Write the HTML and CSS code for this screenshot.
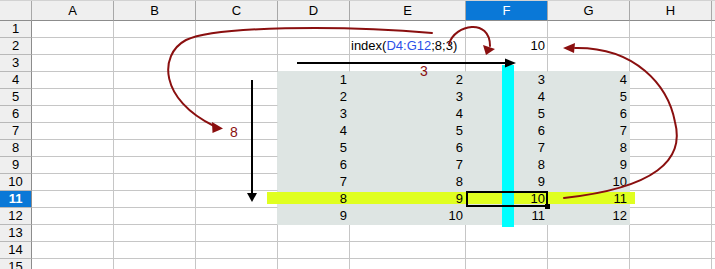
FILE: index.html
```html
<!DOCTYPE html>
<html lang="en">
<head>
    <meta charset="UTF-8">
    <meta name="viewport" content="width=device-width, initial-scale=1.0">
    <title>INDEX</title>
    <link rel="stylesheet" href="styles.css">
</head>
<body>
    <div class="sheet">
        <div class="row head"><div class="ch"></div><div class="ch">A</div><div class="ch">B</div><div class="ch">C</div><div class="ch">D</div><div class="ch">E</div><div class="ch on">F</div><div class="ch">G</div><div class="ch">H</div><div class="ch"></div></div>
        <div class="row"><div class="rh">1</div><div></div><div></div><div></div><div></div><div></div><div></div><div></div><div></div><div></div></div>
        <div class="row"><div class="rh">2</div><div></div><div></div><div></div><div></div><div class="txt">index(<span class="ref">D4:G12</span>;8;3)</div><div><span class="val">10</span></div><div></div><div></div><div></div></div>
        <div class="row"><div class="rh">3</div><div></div><div></div><div></div><div class="edge-b"></div><div class="edge-b"></div><div class="edge-b"></div><div class="edge-b"></div><div></div><div></div></div>
        <div class="row"><div class="rh">4</div><div></div><div></div><div class="edge-r"></div><div class="fill"><span class="val">1</span></div><div class="fill"><span class="val">2</span></div><div class="fill"><span class="val">3</span></div><div class="fill"><span class="val">4</span></div><div></div><div></div></div>
        <div class="row"><div class="rh">5</div><div></div><div></div><div class="edge-r"></div><div class="fill"><span class="val">2</span></div><div class="fill"><span class="val">3</span></div><div class="fill"><span class="val">4</span></div><div class="fill"><span class="val">5</span></div><div></div><div></div></div>
        <div class="row"><div class="rh">6</div><div></div><div></div><div class="edge-r"></div><div class="fill"><span class="val">3</span></div><div class="fill"><span class="val">4</span></div><div class="fill"><span class="val">5</span></div><div class="fill"><span class="val">6</span></div><div></div><div></div></div>
        <div class="row"><div class="rh">7</div><div></div><div></div><div class="edge-r"></div><div class="fill"><span class="val">4</span></div><div class="fill"><span class="val">5</span></div><div class="fill"><span class="val">6</span></div><div class="fill"><span class="val">7</span></div><div></div><div></div></div>
        <div class="row"><div class="rh">8</div><div></div><div></div><div class="edge-r"></div><div class="fill"><span class="val">5</span></div><div class="fill"><span class="val">6</span></div><div class="fill"><span class="val">7</span></div><div class="fill"><span class="val">8</span></div><div></div><div></div></div>
        <div class="row"><div class="rh">9</div><div></div><div></div><div class="edge-r"></div><div class="fill"><span class="val">6</span></div><div class="fill"><span class="val">7</span></div><div class="fill"><span class="val">8</span></div><div class="fill"><span class="val">9</span></div><div></div><div></div></div>
        <div class="row"><div class="rh">10</div><div></div><div></div><div class="edge-r"></div><div class="fill"><span class="val">7</span></div><div class="fill"><span class="val">8</span></div><div class="fill"><span class="val">9</span></div><div class="fill"><span class="val">10</span></div><div></div><div></div></div>
        <div class="row"><div class="rh on">11</div><div></div><div></div><div class="edge-r"></div><div class="fill"><span class="val">8</span></div><div class="fill"><span class="val">9</span></div><div class="fill"><span class="val">10</span></div><div class="fill"><span class="val">11</span></div><div></div><div></div></div>
        <div class="row"><div class="rh">12</div><div></div><div></div><div class="edge-r"></div><div class="fill"><span class="val">9</span></div><div class="fill"><span class="val">10</span></div><div class="fill"><span class="val">11</span></div><div class="fill"><span class="val">12</span></div><div></div><div></div></div>
        <div class="row"><div class="rh">13</div><div></div><div></div><div></div><div></div><div></div><div></div><div></div><div></div><div></div></div>
        <div class="row"><div class="rh">14</div><div></div><div></div><div></div><div></div><div></div><div></div><div></div><div></div><div></div></div>
        <div class="row"><div class="rh">15</div><div></div><div></div><div></div><div></div><div></div><div></div><div></div><div></div><div></div></div>
    </div>

    <!-- highlight bands, drawn under the cell values -->
    <svg class="marks under" width="715" height="269" viewBox="0 0 715 269">
        <rect x="267" y="192" width="368" height="12" fill="#e0ff20"/>
        <rect x="502" y="65" width="12" height="162" fill="#00ffff"/>
    </svg>

    <!-- cell cursor and arrows -->
    <svg class="marks over" width="715" height="269" viewBox="0 0 715 269">
        <rect x="467" y="192" width="80" height="14" fill="none" stroke="#000" stroke-width="2"/>
        <rect x="545" y="204" width="5" height="5" fill="#000"/>

        <line x1="297" y1="63" x2="507" y2="63" stroke="#000" stroke-width="2"/>
        <polygon points="516,63 505,58.5 505,67.5" fill="#000"/>
        <line x1="252" y1="80" x2="252" y2="195" stroke="#000" stroke-width="2"/>
        <polygon points="252,202 247,193 257,193" fill="#000"/>

        <g fill="none" stroke="#8a0f0f" stroke-width="2" stroke-linecap="round">
            <path d="M432 33 C340 25 215 26 186 40 C158 55 160 100 214 126"/>
            <path d="M449 44 C455 24 490 18 490 46"/>
            <path d="M564 198 C655 188 685 160 675 122 C668 85 635 47 575 48"/>
        </g>
        <g fill="#8a0f0f">
            <polygon points="223,128.5 212,122 212.5,133"/>
            <polygon points="486,55 483,45 495,49"/>
            <polygon points="563,48 575,43 574,53"/>
        </g>
        <text class="note" x="420" y="76">3</text>
        <text class="note" x="230" y="137">8</text>
    </svg>
</body>
</html>
```

FILE: styles.css
```css
* {
    box-sizing: border-box;
}

html, body {
    margin: 0;
    overflow: hidden;
    background-color: #fff;
}

body {
    font-family: 'Liberation Sans', Arial, sans-serif;
    font-size: 13px;
    color: #000;
}

.row {
    display: grid;
    grid-template-columns: 32px 82px 82px 82px 72px 116px 82px 82px 82px 1fr;
    height: 17px;
}

.row > div {
    border-right: 1px solid #c6c6c6;
    border-bottom: 1px solid #c6c6c6;
    padding: 0 2px;
    line-height: 16px;
    text-align: right;
    white-space: nowrap;
}

.row.head {
    height: 21px;
    border-top: 1px solid #d2d2d2;
}

.row > .ch {
    background-color: #efefef;
    border-right-color: #a8a8a8;
    border-bottom-color: #8c8c8c;
    line-height: 19px;
    text-align: center;
}

.row > .rh {
    background-color: #efefef;
    border-right-color: #8c8c8c;
    border-bottom-color: #b8b8b8;
    text-align: center;
}

.row > .on {
    background-color: #0a78d7;
    color: #fff;
}

.row > .rh.on {
    font-weight: bold;
}

.row > .txt {
    text-align: left;
    padding-left: 1px;
}

.ref {
    color: #2b50e8;
}

.row > .fill {
    background-color: #dee5e3;
    border-color: #dee5e3;
}

.row > .edge-r {
    border-right-color: #dee5e3;
}

.row > .edge-b {
    border-bottom-color: #dee5e3;
}

.val {
    position: relative;
    z-index: 2;
}

.marks {
    position: absolute;
    left: 0;
    top: 0;
    pointer-events: none;
}

.marks.under {
    z-index: 1;
}

.marks.over {
    z-index: 3;
}

.note {
    font-family: 'Liberation Sans', Arial, sans-serif;
    font-size: 14px;
    fill: #8a0f0f;
}
```
